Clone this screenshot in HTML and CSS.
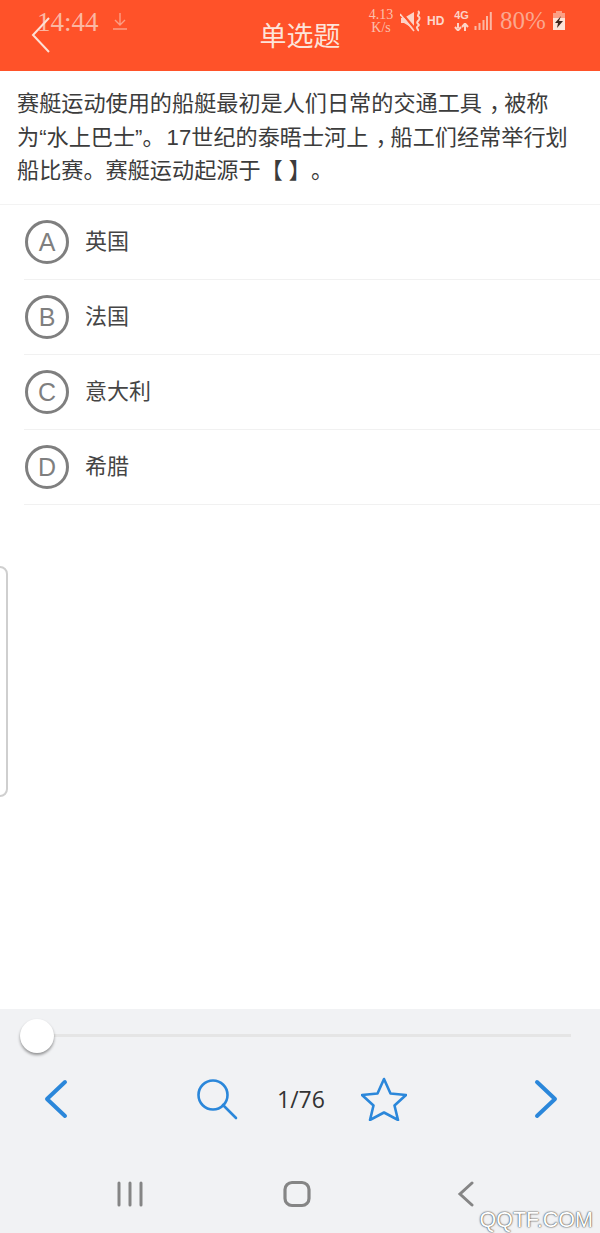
FILE: index.html
```html
<!DOCTYPE html>
<html lang="zh">
<head>
<meta charset="utf-8">
<title>单选题</title>
<link rel="stylesheet" href="styles.css">
</head>
<body>
<div class="app">
  <header class="header">
    <h1 class="title">单选题</h1>
    <div class="status-left">
      <span class="time">14:44</span>
      <svg width="16" height="20" viewBox="0 0 16 20"><path d="M8 1v12M3 8l5 5 5-5M1 17h14" fill="none" stroke="#fb9f85" stroke-width="1.400"/></svg>
    </div>
    <svg class="back" width="20" height="36" viewBox="0 0 20 36"><path d="M18 1 2 18l16 17" fill="none" stroke="#fde0d6" stroke-width="2"/></svg>
    <div class="status-right">
      <span class="speed">4.13<br>K/s</span>
      <svg class="mute" width="22" height="22" viewBox="0 0 22 22"><path d="M1 8h3l10-6v17L4 13H1z" fill="#fdd3c6"/><path d="M0 1l16 19" stroke="#ff5229" stroke-width="2.400"/><path d="M0 4l14 17" stroke="#fdd3c6" stroke-width="1.600"/><path d="M18 1c3 2-1 4 0 5s3 2 0 5 3 3 0 5 1 3 0 5" fill="none" stroke="#fdd3c6" stroke-width="2"/></svg>
      <span class="hd">HD</span>
      <span class="net"><span class="net-label">4G</span><svg width="15" height="8" viewBox="0 0 15 8"><path d="M4 0v5M1 4l3 3.500L7 4M11 8V3M8 4l3-3.500L14 4" fill="none" stroke="#fdd3c6" stroke-width="2"/></svg></span>
      <svg class="signal" width="18" height="18" viewBox="0 0 18 18"><path d="M1.500 18v-4M5.500 18v-7M9.500 18V8M13 18V4M16.800 18V0" stroke="#fbb7a3" stroke-width="2"/></svg>
      <span class="battery-text">80%</span>
      <svg class="battery" width="14" height="20" viewBox="0 0 14 20"><path d="M4 0h6v2H4z" fill="#fb9f85"/><path d="M1 2h12v6H1z" fill="#fb9f85"/><path d="M1 7h12v12H1z" fill="#fde3d8"/><path d="M9 5 3 12h3l-1 5 6-7H7z" fill="#40281f"/></svg>
    </div>
  </header>

  <main class="main">
    <p class="question">赛艇运动使用的船艇最初是人们日常的交通工具<span class="comma">，</span>被称<br>为“水上巴士”。<span class="digits">17</span>世纪的泰晤士河上<span class="comma">，</span>船工们经常举行划<br>船比赛。赛艇运动起源于【 】。</p>
    <ul class="options">
      <li class="option"><span class="letter">A</span><span class="label">英国</span></li>
      <li class="option"><span class="letter">B</span><span class="label">法国</span></li>
      <li class="option"><span class="letter">C</span><span class="label">意大利</span></li>
      <li class="option"><span class="letter">D</span><span class="label">希腊</span></li>
    </ul>
    <div class="edge-tab"></div>
  </main>

  <footer class="footer">
    <div class="slider"><span class="track"></span><span class="thumb"></span></div>
    <div class="tools">
      <svg width="24" height="40" viewBox="0 0 24 40"><path d="M21 3 3 20l18 17" fill="none" stroke="#2b87da" stroke-width="4" stroke-linecap="round" stroke-linejoin="round"/></svg>
      <div class="center">
        <svg width="42" height="42" viewBox="0 0 42 42"><circle cx="17" cy="17" r="14.500" fill="none" stroke="#2b87da" stroke-width="2.600"/><path d="M27 27l13 13" stroke="#2b87da" stroke-width="2.600" stroke-linecap="round"/></svg>
        <span class="pager">1/76</span>
        <svg class="star" width="46" height="44" viewBox="0 0 46 44"><path d="M23 2l6.500 14.500 15.500 1.500-11.500 10.500 3.500 14.500L23 35.500 9 43l3.500-14.500L1 18l15.500-1.500z" fill="none" stroke="#2b87da" stroke-width="2.600" stroke-linejoin="round"/></svg>
      </div>
      <svg width="24" height="40" viewBox="0 0 24 40"><path d="M3 3l18 17L3 37" fill="none" stroke="#2b87da" stroke-width="4" stroke-linecap="round" stroke-linejoin="round"/></svg>
    </div>
    <nav class="sysnav">
      <svg width="28" height="26" viewBox="0 0 28 26"><path d="M3 2v22M14 2v22M25 2v22" stroke="#858585" stroke-width="3" stroke-linecap="round"/></svg>
      <svg class="home" width="28" height="28" viewBox="0 0 28 28"><rect x="2" y="2.500" width="24" height="23" rx="7" fill="none" stroke="#858585" stroke-width="3.200"/></svg>
      <svg class="sysback" width="18" height="26" viewBox="0 0 18 26"><path d="M15 2 3 13l12 11" fill="none" stroke="#858585" stroke-width="3" stroke-linecap="round"/></svg>
    </nav>
    <span class="watermark">QQTF.COM</span>
  </footer>
</div>
</body>
</html>
```
FILE: styles.css
```css
* { box-sizing: border-box; }
html, body { margin: 0; padding: 0; }
body { font-family: "Liberation Sans", "Noto Sans CJK SC", sans-serif; background: #fff; text-spacing-trim: space-all; }
.app { width: 600px; height: 1233px; display: flex; flex-direction: column; overflow: hidden; }

.header { position: relative; height: 71px; background: #ff5229; display: flex; justify-content: center; flex: none; }
.title { margin: 19px 0 0; font-size: 27px; line-height: 32px; font-weight: 400; color: #fde4da; font-family: "Noto Sans CJK SC", sans-serif; }
.back { position: absolute; left: 31px; top: 17px; }
.status-left { position: absolute; left: 37px; top: 8px; display: flex; align-items: center; gap: 13px; color: #fbb7a3; }
.time { font-family: "Liberation Serif", serif; font-size: 27px; line-height: 28px; }
.status-right { position: absolute; left: 368px; top: 7px; width: 226px; height: 28px; display: flex; align-items: center; color: #fbc0ae; }
.speed { font-family: "Liberation Serif", serif; font-size: 14px; line-height: 13px; text-align: center; width: 26px; flex: none; }
.mute { margin-left: 6px; flex: none; }
.hd { margin-left: 5px; width: 17px; font-size: 12px; font-weight: 700; color: #fdd8cc; flex: none; }
.net { margin-left: 10px; width: 15px; display: flex; flex-direction: column; align-items: center; gap: 3px; flex: none; color: #fdd3c6; }
.net-label { font-size: 11px; line-height: 9px; font-weight: 700; }
.net svg { display: block; }
.signal { margin-left: 5px; flex: none; }
.battery-text { margin-left: 8px; width: 46px; font-family: "Liberation Serif", serif; font-size: 25px; line-height: 28px; color: #fba78f; flex: none; }
.battery { margin-left: 6px; flex: none; }

.main { position: relative; flex: 1; background: #fff; }
.question { margin: 0; height: 134px; padding: 16px 17px 0; font-size: 22.150px; line-height: 33.500px; color: #3c3c3c; border-bottom: 1px solid #f3f3f3; white-space: nowrap; }
.comma { padding-left: 7px; margin-right: -7px; }
.digits { margin-left: 2px; }
.options { margin: 0; padding: 0 0 0 24px; list-style: none; }
.option { height: 75px; display: flex; align-items: center; gap: 16px; border-bottom: 1px solid #f1f1f1; }
.letter { width: 44px; height: 44px; flex: none; border: 3px solid #7f7f7f; border-radius: 50%; display: flex; align-items: center; justify-content: center; font-size: 25px; color: #7f7f7f; margin-left: 1px; }
.label { font-size: 22px; line-height: 30px; padding-bottom: 6px; color: #454545; font-family: "Noto Sans CJK SC", sans-serif; }
.edge-tab { position: absolute; left: -10px; top: 495px; width: 18px; height: 231px; border: 2px solid #cfcfcf; border-radius: 8px; background: #fff; }

.footer { position: relative; height: 224px; flex: none; background: #f1f2f4; }
.slider { position: relative; height: 54px; }
.track { position: absolute; left: 37px; top: 25px; width: 534px; height: 3px; background: #e5e5e5; }
.thumb { position: absolute; left: 20px; top: 10px; width: 34px; height: 34px; border-radius: 50%; background: #fff; box-shadow: 0 2px 3px rgba(0,0,0,.4); }
.tools { position: relative; height: 72px; padding: 0 42px 0 44px; display: flex; align-items: center; justify-content: space-between; }
.center { position: absolute; left: 196px; top: 14px; display: flex; align-items: center; }
.pager { margin-left: 39px; font-size: 23px; color: #333; font-family: "Open Sans", sans-serif; }
.star { margin-left: 36px; }
.sysnav { position: absolute; left: 116px; top: 171px; height: 28px; display: flex; align-items: center; }
.home { margin-left: 139px; }
.sysback { margin-left: 146px; }
.watermark { position: absolute; right: 7px; top: 199px; font-size: 21.500px; color: #fff; text-shadow: 0 0 2px #444, 0 0 1px #444; }
```
